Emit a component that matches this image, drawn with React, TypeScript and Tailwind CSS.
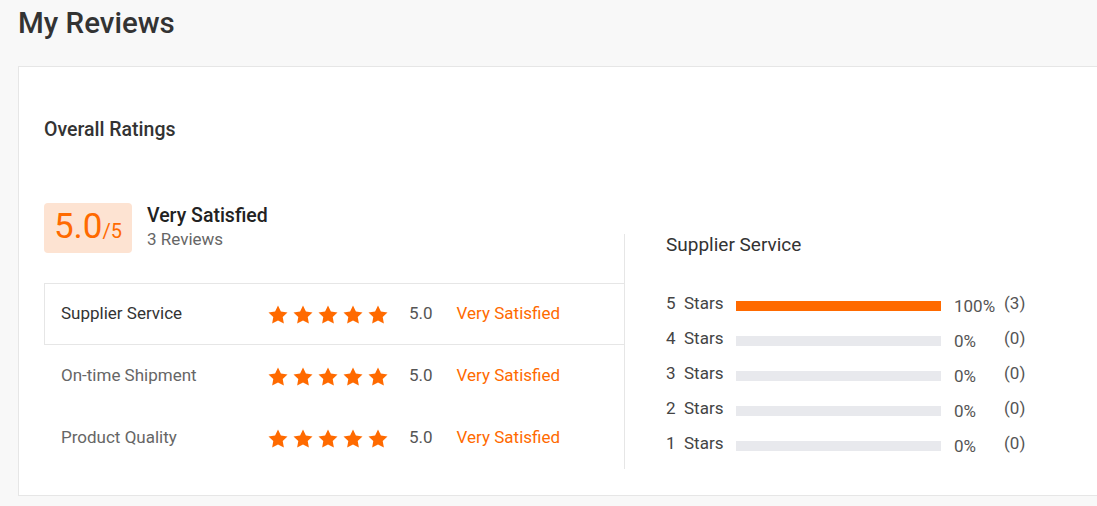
const ratings = [
  { label: "Supplier Service", score: "5.0", text: "Very Satisfied", active: true },
  { label: "On-time Shipment", score: "5.0", text: "Very Satisfied", active: false },
  { label: "Product Quality", score: "5.0", text: "Very Satisfied", active: false },
];

const distribution = [
  { stars: 5, pct: 100, count: 3 },
  { stars: 4, pct: 0, count: 0 },
  { stars: 3, pct: 0, count: 0 },
  { stars: 2, pct: 0, count: 0 },
  { stars: 1, pct: 0, count: 0 },
];

function Star() {
  return (
    <svg width="20" height="19" viewBox="0 0 24 23" className="shrink-0">
      <path
        d="M12 0.6l3.5 7.3 8 1.1-5.8 5.6 1.4 7.9L12 18.7l-7.1 3.8 1.4-7.9L0.5 9l8-1.1z"
        fill="#ff6a00"
      />
    </svg>
  );
}

export default function App() {
  return (
    <div className="min-h-[506px] bg-[#f8f8f8] pl-[18px] font-['Roboto',sans-serif] text-[#333]">
      <h1 className="pt-[4px] text-[29.5px] font-medium leading-[38px] text-[#333]">My Reviews</h1>

      <section className="mt-[24px] h-[430px] border border-r-0 border-[#e6e6e6] bg-white pl-[25px]">
        <h2 className="mt-[51px] text-[19.5px] font-medium leading-[24px] text-[#333]">Overall Ratings</h2>

        <div className="mt-[61px] flex items-end">
          {/* summary + per-category rows */}
          <div className="w-[580px]">
            <div className="flex items-start">
              <div className="flex h-[50px] w-[88px] items-baseline justify-center rounded-[4px] bg-[#fde3d2] pt-[3px] text-[#ff6a00]">
                <span className="text-[35px] leading-[42px]">5.0</span>
                <span className="text-[20px] leading-[20px]">/5</span>
              </div>
              <div className="ml-[15px]">
                <div className="text-[19.5px] font-medium leading-[25px] text-[#222]">Very Satisfied</div>
                <div className="text-[17px] leading-[23px] text-[#666]">3 Reviews</div>
              </div>
            </div>

            <div className="mt-[30px]">
              {ratings.map((r) => (
                <div
                  key={r.label}
                  className={
                    r.active
                      ? "flex h-[62px] items-center border border-r-0 border-[#e6e6e6] pl-[16px]"
                      : "flex h-[62px] items-center border border-transparent pl-[16px]"
                  }
                >
                  <span
                    className={
                      r.active
                        ? "w-[207px] text-[17px] text-[#333]"
                        : "w-[207px] text-[17px] text-[#666]"
                    }
                  >
                    {r.label}
                  </span>
                  <div className="flex gap-[5px]">
                    {[0, 1, 2, 3, 4].map((i) => (
                      <Star key={i} />
                    ))}
                  </div>
                  <span className="ml-[21px] text-[17px] text-[#555]">{r.score}</span>
                  <span className="ml-[24px] text-[17px] text-[#ff6a00]">{r.text}</span>
                </div>
              ))}
            </div>
          </div>

          {/* star distribution */}
          <div className="h-[235px] border-l border-[#e6e6e6] pl-[41px]">
            <h3 className="text-[19px] leading-[22px] text-[#333]">Supplier Service</h3>
            <div className="mt-[37px] flex flex-col gap-[13px]">
              {distribution.map((d) => (
                <div key={d.stars} className="flex h-[22px] items-center text-[17px] text-[#444]">
                  <span className="w-[18px]">{d.stars}</span>
                  <span className="w-[52px]">Stars</span>
                  <div className="mt-[4px] h-[10px] w-[205px] bg-[#e8e9ed]">
                    <div className="h-full bg-[#ff6a00]" style={{ width: `${d.pct}%` }} />
                  </div>
                  <span className="ml-[13px] mt-[6px] w-[50px] text-[#555]">{d.pct}%</span>
                  <span className="text-[#555]">({d.count})</span>
                </div>
              ))}
            </div>
          </div>
        </div>
      </section>
    </div>
  );
}
